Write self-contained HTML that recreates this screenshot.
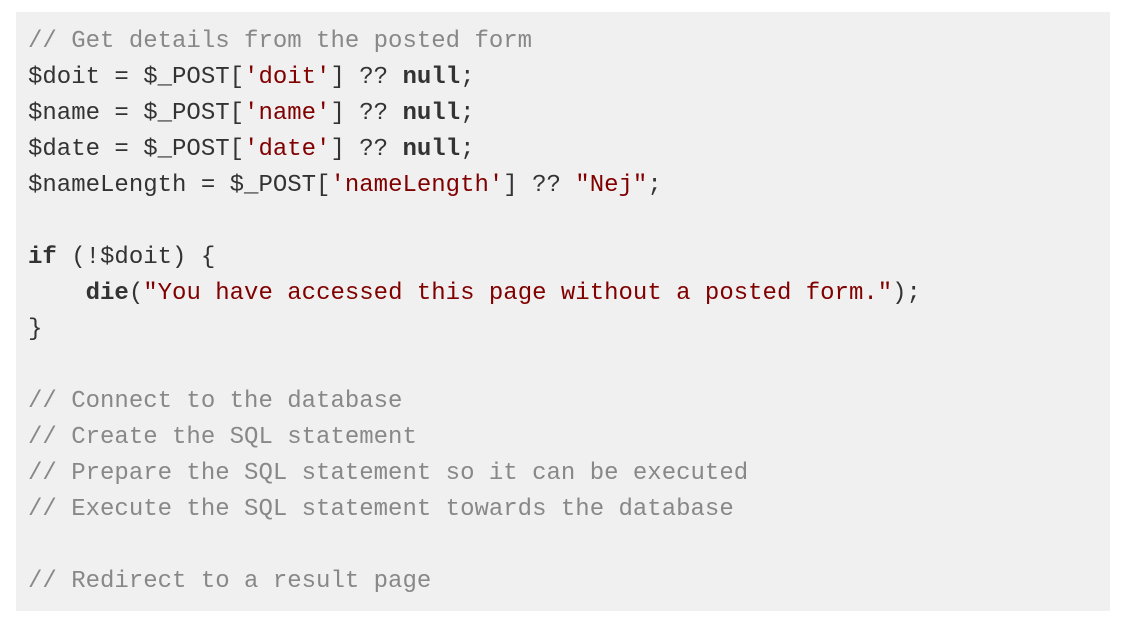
<!DOCTYPE html>
<html><head><style>
html,body{margin:0;padding:0;background:#fff;width:1124px;height:631px;overflow:hidden}
pre{position:absolute;left:16px;top:12px;width:1082px;height:580px;margin:0;padding:12px 0 7px 12px;background:#f0f0f0;font-family:"Liberation Mono",monospace;font-size:24px;line-height:36px;color:#333}
.c{color:#888}.s{color:#800000}b{color:#333}
</style></head><body>
<pre><span class="c">// Get details from the posted form</span>
$doit = $_POST[<span class="s">'doit'</span>] ?? <b>null</b>;
$name = $_POST[<span class="s">'name'</span>] ?? <b>null</b>;
$date = $_POST[<span class="s">'date'</span>] ?? <b>null</b>;
$nameLength = $_POST[<span class="s">'nameLength'</span>] ?? <span class="s">"Nej"</span>;

<b>if</b> (!$doit) {
    <b>die</b>(<span class="s">"You have accessed this page without a posted form."</span>);
}

<span class="c">// Connect to the database</span>
<span class="c">// Create the SQL statement</span>
<span class="c">// Prepare the SQL statement so it can be executed</span>
<span class="c">// Execute the SQL statement towards the database</span>

<span class="c">// Redirect to a result page</span></pre>
</body></html>
